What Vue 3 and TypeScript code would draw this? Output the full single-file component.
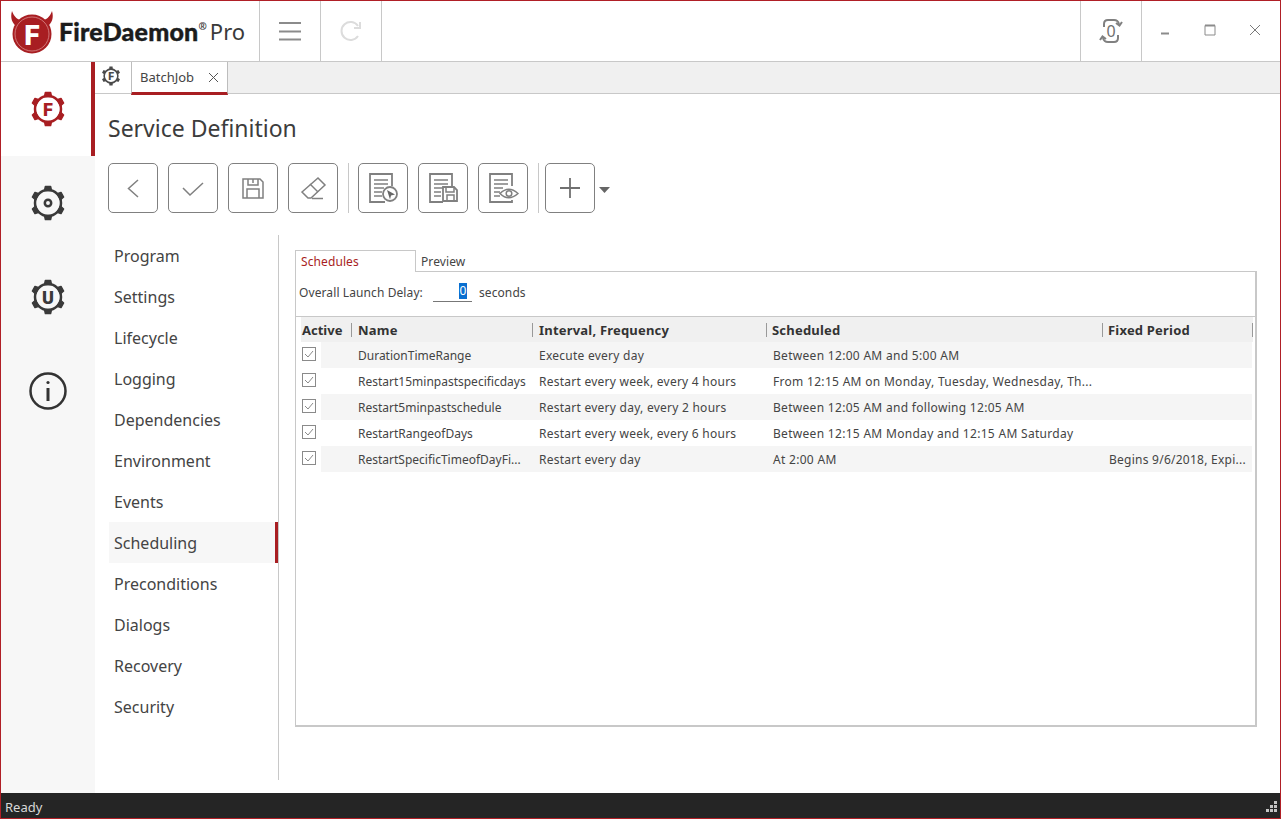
<script setup lang="ts">
const railItems = [
  { key: 'f', letter: 'F', active: true },
  { key: 'o', letter: '', active: false },
  { key: 'u', letter: 'U', active: false },
]
const knobAngles = [0, 60, 120, 180, 240, 300]
const navItems = ['Program', 'Settings', 'Lifecycle', 'Logging', 'Dependencies', 'Environment', 'Events', 'Scheduling', 'Preconditions', 'Dialogs', 'Recovery', 'Security']
const columns = ['Active', 'Name', 'Interval, Frequency', 'Scheduled', 'Fixed Period']
const rows = [
  { name: 'DurationTimeRange', interval: 'Execute every day', scheduled: 'Between 12:00 AM and 5:00 AM', fixed: '' },
  { name: 'Restart15minpastspecificdays', interval: 'Restart every week, every 4 hours', scheduled: 'From 12:15 AM on Monday, Tuesday, Wednesday, Th...', fixed: '' },
  { name: 'Restart5minpastschedule', interval: 'Restart every day, every 2 hours', scheduled: 'Between 12:05 AM and following 12:05 AM', fixed: '' },
  { name: 'RestartRangeofDays', interval: 'Restart every week, every 6 hours', scheduled: 'Between 12:15 AM Monday and 12:15 AM Saturday', fixed: '' },
  { name: 'RestartSpecificTimeofDayFi...', interval: 'Restart every day', scheduled: 'At 2:00 AM', fixed: 'Begins 9/6/2018, Expi...' },
]
</script>

<template>
  <div class="window">
    <header class="topbar">
      <div class="brand">
        <svg class="logo" width="46" height="46" viewBox="0 0 46 46">
          <path d="M3 3 C1 10 3 15 8 19 L14 13 C9 12 5 9 3 3 Z M43 3 C45 10 43 15 38 19 L32 13 C37 12 41 9 43 3 Z" fill="#a81e22" />
          <circle cx="23" cy="26" r="19.500" fill="#a81e22" />
          <circle cx="23" cy="26" r="17" fill="none" stroke="#d98b8d" stroke-width="0.800" />
          <text x="23" y="36.500" text-anchor="middle" class="logo-f">F</text>
        </svg>
        <span class="brand-name">FireDaemon</span><sup class="brand-reg">®</sup>
        <span class="brand-pro">Pro</span>
      </div>
      <button class="top-btn">
        <svg width="24" height="20" viewBox="0 0 24 20" fill="none" stroke="#8b8b8b" stroke-width="2">
          <path d="M1 2H23M1 10.500H23M1 18.500H23" />
        </svg>
      </button>
      <button class="top-btn">
        <svg width="26" height="24" viewBox="0 0 26 24" fill="none" stroke="#dcdcdc" stroke-width="2">
          <path d="M20 17 A9 9 0 1 1 20 7" />
          <path d="M22 3 V9 H16" />
        </svg>
      </button>
      <div class="top-spacer"></div>
      <button class="top-btn sync">
        <svg width="26" height="26" viewBox="0 0 26 26" fill="none" stroke="#808080" stroke-width="2">
          <path d="M6 9 V6 Q6 2 10 2 H16 Q20 2 21 6" />
          <path d="M18 5 L21.500 7.500 L24 4" />
          <path d="M20 17 V20 Q20 24 16 24 H10 Q6 24 5 20" />
          <path d="M8 21 L4.500 18.500 L2 22" />
          <text x="13" y="18.500" text-anchor="middle" class="sync-zero">0</text>
        </svg>
      </button>
      <div class="win-controls">
        <span class="ctl"><svg width="12" height="12" viewBox="0 0 12 12"><path d="M2 9.500H10" stroke="#8b8b8b" stroke-width="2" /></svg></span>
        <span class="ctl"><svg width="12" height="12" viewBox="0 0 12 12" fill="none" stroke="#8b8b8b"><path d="M1 1.500H11V11H1Z" /><path d="M1 1.500H11" stroke-width="2" /></svg></span>
        <span class="ctl"><svg width="12" height="12" viewBox="0 0 12 12" fill="none" stroke="#7a7a7a"><path d="M1 1 L11 11 M11 1 L1 11" /></svg></span>
      </div>
    </header>

    <div class="body">
      <aside class="rail">
        <div v-for="r in railItems" :key="r.key" class="rail-item" :class="{ active: r.active }">
          <svg width="38" height="38" viewBox="-19 -19 38 38" :class="r.active ? 'gear red' : 'gear dark'">
            <circle r="13" fill="none" stroke="currentColor" stroke-width="2.500" />
            <path v-for="a in knobAngles" :key="a" :transform="`rotate(${a})`" d="M-3.500 -12.500 L-2.600 -16.500 H2.600 L3.500 -12.500 Z" fill="currentColor" stroke="currentColor" stroke-width="1.500" stroke-linejoin="round" />
            <text v-if="r.letter === 'F'" y="6.500" text-anchor="middle" class="gear-f">F</text>
            <text v-if="r.letter === 'U'" y="6.500" text-anchor="middle" class="gear-u">U</text>
            <circle v-if="r.key === 'o'" r="3.200" fill="none" stroke="currentColor" stroke-width="2.500" />
          </svg>
        </div>
        <div class="rail-item">
          <svg width="38" height="38" viewBox="0 0 38 38" fill="none" stroke="#333" stroke-width="2.500">
            <circle cx="19" cy="19" r="17.500" />
            <path d="M19 16V29" stroke-width="3" />
            <circle cx="19" cy="10.500" r="1.600" fill="#333" stroke="none" />
          </svg>
        </div>
      </aside>

      <main class="content">
        <div class="tabstrip">
          <div class="home-tab">
            <svg width="20" height="20" viewBox="-19 -19 38 38" class="gear grey">
              <circle r="13" fill="none" stroke="currentColor" stroke-width="3" />
              <path v-for="a in knobAngles" :key="a" :transform="`rotate(${a})`" d="M-3.500 -13 L-3 -18 H3 L3.500 -13 Z" fill="currentColor" />
              <text y="7" text-anchor="middle" class="gear-f small">F</text>
            </svg>
          </div>
          <div class="doc-tab">
            <span>BatchJob</span>
            <svg width="11" height="11" viewBox="0 0 11 11" stroke="#555" fill="none"><path d="M1 1 L10 10 M10 1 L1 10" /></svg>
          </div>
        </div>

        <h1 class="title">Service Definition</h1>

        <div class="toolbar">
          <button class="tool">
            <svg width="30" height="30" viewBox="0 0 30 30" fill="none" stroke="#808080" stroke-width="1.500"><path d="M20 7 L10.500 15.500 L20 24" /></svg>
          </button>
          <button class="tool">
            <svg width="30" height="30" viewBox="0 0 30 30" fill="none" stroke="#808080" stroke-width="1.500"><path d="M5 15 L12 22 L25 10" /></svg>
          </button>
          <button class="tool">
            <svg width="30" height="30" viewBox="0 0 30 30" fill="none" stroke="#808080" stroke-width="1.500"><path d="M5 6 H22 L25 9 V25 H5 Z" /><path d="M10 6 V12 H20 V6 M15 6 V10" /><path d="M9 25 V16 H21 V25" /></svg>
          </button>
          <button class="tool">
            <svg width="30" height="30" viewBox="0 0 30 30" fill="none" stroke="#808080" stroke-width="1.500"><path d="M4 19 L20 5 L27 12 L13 25 H10 Z" /><path d="M12 11 L20 19" /><path d="M14 25.500 H25" /></svg>
          </button>
          <div class="tool-sep"></div>
          <button class="tool">
            <svg width="32" height="32" viewBox="0 0 32 32" fill="none" stroke="#808080" stroke-width="1.800">
              <path d="M25 14 V2 H3 V30 H18" /><path d="M7 8 H21 M7 12 H21 M7 16 H17 M7 20 H15 M7 24 H15" stroke-width="1.400" />
              <circle cx="23" cy="22" r="7" fill="#fff" />
              <path d="M20 18 L28 22.500 L24 23.500 L23 27.500 Z" fill="#666" stroke="none" />
            </svg>
          </button>
          <button class="tool">
            <svg width="32" height="32" viewBox="0 0 32 32" fill="none" stroke="#808080" stroke-width="1.800">
              <path d="M25 15 V2 H3 V30 H16" /><path d="M7 8 H21 M7 12 H21 M7 16 H16 M7 20 H14 M7 24 H14" stroke-width="1.400" />
              <path d="M16 15 H27 L30 18 V29 H16 Z" fill="#fff" /><path d="M19 15 V20 H27 V15 M20 29 V23 H27 V29" stroke-width="1.500" />
            </svg>
          </button>
          <button class="tool">
            <svg width="32" height="32" viewBox="0 0 32 32" fill="none" stroke="#808080" stroke-width="1.800">
              <path d="M25 14 V2 H3 V30 H25 V28" /><path d="M7 8 H21 M7 12 H21 M7 16 H16 M7 20 H13 M7 24 H13" stroke-width="1.400" />
              <path d="M13 21.500 Q21.500 13 31 21.500 Q21.500 30 13 21.500 Z" fill="#fff" stroke-width="1.500" />
              <circle cx="22" cy="21.500" r="2.800" stroke-width="1.500" />
            </svg>
          </button>
          <div class="tool-sep second"></div>
          <button class="tool">
            <svg width="30" height="30" viewBox="0 0 30 30" fill="none" stroke="#707070" stroke-width="1.800"><path d="M15 5 V25 M5 15 H25" /></svg>
          </button>
          <svg class="caret" width="11" height="6" viewBox="0 0 11 6"><path d="M0 0 H11 L5.500 6 Z" fill="#666" /></svg>
        </div>

        <div class="workspace">
          <nav class="nav">
            <a v-for="n in navItems" :key="n" class="nav-item" :class="{ current: n === 'Scheduling' }">{{ n }}</a>
          </nav>

          <section class="panel">
            <div class="panel-tabs">
              <span class="ptab on">Schedules</span>
              <span class="ptab">Preview</span>
            </div>
            <div class="panel-box">
              <div class="delay">
                <span class="delay-label">Overall Launch Delay:</span>
                <span class="delay-input"><span class="selected">0</span></span>
                <span class="delay-label">seconds</span>
              </div>
              <div class="grid-head">
                <div v-for="c in columns" :key="c" class="head-cell">{{ c }}</div>
              </div>
              <div v-for="(r, i) in rows" :key="r.name" class="grid-row" :class="{ alt: i % 2 === 0 }">
                <div class="check-cell">
                  <span class="check-box">
                    <svg width="14" height="14" viewBox="0 0 14 14" fill="none"><rect x="0.500" y="0.500" width="13" height="13" stroke="#8a8a8a" fill="#fff" /><path d="M3 7 L6 10 L11 4" stroke="#8a8a8a" /></svg>
                  </span>
                </div>
                <div class="cell name">{{ r.name }}</div>
                <div class="cell">{{ r.interval }}</div>
                <div class="cell sched">{{ r.scheduled }}</div>
                <div class="cell">{{ r.fixed }}</div>
              </div>
            </div>
          </section>
        </div>
      </main>
    </div>

    <footer class="status">
      <span>Ready</span>
      <svg width="12" height="11" viewBox="0 0 12 11" fill="#c4c4c4">
        <rect x="8" y="0" width="3" height="3" /><rect x="4" y="4" width="3" height="3" /><rect x="8" y="4" width="3" height="3" />
        <rect x="0" y="8" width="3" height="3" /><rect x="4" y="8" width="3" height="3" /><rect x="8" y="8" width="3" height="3" />
      </svg>
    </footer>
  </div>
</template>

<style>
html, body { margin: 0; background: #fff; }
</style>

<style scoped>
.window {
  box-sizing: border-box;
  width: 1281px;
  height: 819px;
  border: 1px solid #b01f26;
  display: flex;
  flex-direction: column;
  font-family: "Noto Sans", "Open Sans", sans-serif;
  color: #333;
  overflow: hidden;
  background: #fff;
}
.topbar {
  height: 61px;
  flex: none;
  box-sizing: border-box;
  border-bottom: 1px solid #c8c8c8;
  display: flex;
}
button { padding: 0; margin: 0; background: none; font: inherit; }
.brand {
  width: 259px;
  flex: none;
  box-sizing: border-box;
  display: flex;
  align-items: center;
  padding-left: 8px;
  border-right: 1px solid #c8c8c8;
}
.logo { flex: none; margin: 0 4px 0 0; }
.logo-f { font: 900 28px "Roboto", sans-serif; fill: #fff; }
.brand-name {
  font: 900 25px/1 "Lato", sans-serif;
  color: #1c1c1c;
  letter-spacing: 0.2px;
  -webkit-text-stroke: 0.4px #1c1c1c;
}
.brand-reg { font: 700 10px/1 "Noto Sans", sans-serif; margin: -10px 0 0 0; color: #333; }
.brand-pro { font: 400 22px/1 "Noto Sans", sans-serif; color: #3a3a3a; margin-left: 3px; }
.top-btn {
  width: 61px;
  flex: none;
  border: 0;
  border-right: 1px solid #c8c8c8;
  display: flex;
  align-items: center;
  justify-content: center;
}
.top-spacer { flex: 1; border-right: 1px solid #c8c8c8; }
.sync-zero { font: 400 16px "Noto Sans", sans-serif; fill: #707070; stroke: none; }
.win-controls { width: 138px; flex: none; display: flex; box-sizing: border-box; padding-right: 2px; }
.ctl { width: 46px; display: flex; align-items: center; justify-content: center; padding-bottom: 3px; box-sizing: border-box; }

.body { flex: 1; display: flex; min-height: 0; }
.rail { width: 94px; flex: none; background: #f7f7f7; }
.rail-item {
  height: 94px;
  box-sizing: border-box;
  display: flex;
  align-items: center;
  justify-content: center;
}
.rail-item.active { background: #fff; border-right: 4px solid #a81e22; padding-left: 4px; }
.gear.red { color: #a81e22; }
.gear.dark { color: #3a3a3a; }
.gear.grey { color: #4a4a4a; }
.gear-f { font: 900 18px "Roboto", sans-serif; fill: #a81e22; }
.gear-f.small { fill: #4a4a4a; font-size: 20px; }
.gear-u { font: 900 18px "Roboto", sans-serif; fill: #3a3a3a; }

.content { flex: 1; min-width: 0; display: flex; flex-direction: column; }
.tabstrip {
  height: 32px;
  flex: none;
  background: #f0f0f0;
  box-sizing: border-box;
  border-bottom: 1px solid #c8c8c8;
  display: flex;
}
.home-tab {
  width: 36px;
  height: 31px;
  background: #fff;
  box-sizing: border-box;
  display: flex;
  align-items: flex-start;
  justify-content: center;
  padding: 4px 4px 0 0;
}
.doc-tab {
  width: 97px;
  height: 33px;
  box-sizing: border-box;
  background: #fff;
  border-left: 1px solid #bdbdbd;
  border-right: 1px solid #bdbdbd;
  border-bottom: 3px solid #a81e22;
  display: flex;
  align-items: center;
  justify-content: space-between;
  padding: 0 8px 0 8px;
  font-size: 13px;
  color: #444;
}
.title {
  margin: 18px 0 0 13px;
  font-weight: 400;
  font-size: 23px;
  line-height: 32px;
  color: #3c3c3c;
}
.toolbar {
  margin: 19px 0 0 13px;
  display: flex;
  align-items: center;
  height: 50px;
}
.tool {
  width: 50px;
  height: 50px;
  box-sizing: border-box;
  border: 1px solid #808080;
  border-radius: 5px;
  margin-right: 10px;
  display: flex;
  align-items: center;
  justify-content: center;
  flex: none;
}
.tool-sep { width: 1px; height: 50px; background: #c8c8c8; margin-right: 9px; flex: none; }
.tool-sep.second { margin-right: 6px; }
.caret { margin: 3px 0 0 -6px; }

.workspace { flex: 1; display: flex; min-height: 0; margin: 22px 0 13px 14px; }
.nav {
  width: 170px;
  flex: none;
  box-sizing: border-box;
  border-right: 1px solid #c8c8c8;
}
.nav-item {
  display: flex;
  align-items: center;
  height: 41px;
  padding-left: 5px;
  font-size: 16px;
  color: #444;
  box-sizing: border-box;
}
.nav-item.current { background: #f7f7f7; border-right: 3px solid #a81e22; }
.panel { margin: 15px 0 0 16px; width: 962px; flex: none; height: 477px; display: flex; flex-direction: column; }
.panel-tabs { display: flex; height: 22px; flex: none; font-size: 12px; position: relative; z-index: 1; }
.ptab { box-sizing: border-box; padding: 4px 0 0 5px; line-height: 16px; color: #444; height: 22px; letter-spacing: 0.1px; }
.ptab.on {
  width: 121px;
  color: #a81e22;
  background: #fff;
  border: 1px solid #c8c8c8;
  border-bottom: 0;
  padding-top: 3px;
}
.panel-box {
  flex: 1;
  box-sizing: border-box;
  border: 1px solid #c8c8c8;
  border-width: 1px 2px 2px 1px;
  margin-top: -1px;
}
.delay {
  height: 45px;
  box-sizing: border-box;
  border-bottom: 1px solid #c8c8c8;
  display: flex;
  align-items: center;
  padding: 0 0 3px 3px;
  font-size: 12px;
  color: #444;
}
.delay-label { letter-spacing: 0.1px; }
.delay-input {
  width: 39px;
  height: 19px;
  margin: 0 7px 0 10px;
  box-sizing: border-box;
  border-bottom: 1px solid #777;
  display: flex;
  justify-content: flex-end;
  padding-right: 5px;
  line-height: 16px;
}
.selected { background: #0a6fd0; color: #fff; width: 8px; height: 16px; text-align: center; display: block; }
.grid-head, .grid-row {
  display: grid;
  grid-template-columns: 51px 181px 234px 336px 150px;
  margin: 0 3px 0 5px;
}
.grid-head { height: 25px; background: #f0f0f0; margin-right: 2px; }
.head-cell {
  font-size: 13px;
  font-weight: 700;
  color: #333;
  padding-left: 5px;
  box-sizing: border-box;
  border-right: 1px solid #999;
  white-space: nowrap;
  height: 14px;
  margin-top: 6px;
  line-height: 14px;
  letter-spacing: 0.2px;
}
.head-cell:first-child { padding-left: 1px; letter-spacing: 0; }
.head-cell:nth-child(2), .head-cell:nth-child(3) { padding-left: 6px; }
.grid-row { height: 26px; font-size: 12px; color: #444; }
.grid-row.alt { background: #f5f5f5; }
.check-cell { display: flex; }
.check-box { width: 20px; background: #fff; display: flex; align-items: center; padding: 0 0 2px 1px; box-sizing: border-box; }
.cell { display: flex; align-items: center; padding-left: 6px; white-space: nowrap; overflow: hidden; letter-spacing: 0.25px; }
.cell.name { letter-spacing: 0; }
.cell.sched { letter-spacing: 0.3px; }
.status {
  height: 25px;
  flex: none;
  background: #252525;
  color: #d8d8d8;
  font-size: 13px;
  display: flex;
  align-items: center;
  justify-content: space-between;
  padding: 2px 2px 0 4px;
  box-sizing: border-box;
}
</style>
